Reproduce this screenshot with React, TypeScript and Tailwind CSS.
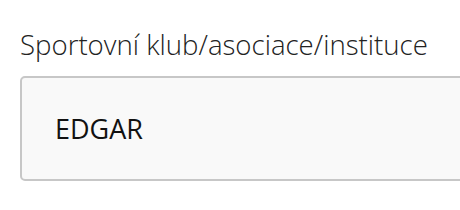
import React from 'react'

export default function App() {
  return (
    <div className="h-[210px] w-[460px] overflow-hidden bg-white pl-5 pt-[25px] font-['Open_Sans',sans-serif]">
      <label className="block text-[27.6px] font-light leading-[38px] text-[#222]">Sportovní klub/asociace/instituce</label>
      <div className="mt-[13px] flex h-[105px] w-[480px] items-center rounded-[5px] border-2 border-[#c7c7c7] bg-[#f9f9f9] pl-[33px]">
        <span className="pt-[2px] text-[27px] text-[#111]">EDGAR</span>
      </div>
    </div>
  )
}
